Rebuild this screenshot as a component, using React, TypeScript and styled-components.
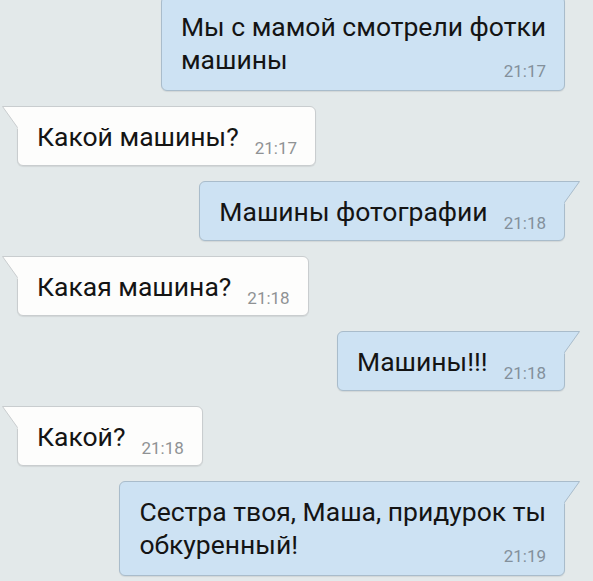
import React from "react";
import styled, { createGlobalStyle } from "styled-components";

const GlobalStyle = createGlobalStyle`
  html, body {
    margin: 0;
    padding: 0;
    background: #e3e9ea;
    overflow: hidden;
  }
  body {
    font-family: Roboto, "Noto Sans", Arial, sans-serif;
  }
`;

type Side = "in" | "out";

interface Message {
  side: Side;
  lines: string[];
  time: string;
  tail: boolean;
}

const messages: Message[] = [
  { side: "out", lines: ["Мы с мамой смотрели фотки", "машины"], time: "21:17", tail: false },
  { side: "in", lines: ["Какой машины?"], time: "21:17", tail: true },
  { side: "out", lines: ["Машины фотографии"], time: "21:18", tail: true },
  { side: "in", lines: ["Какая машина?"], time: "21:18", tail: true },
  { side: "out", lines: ["Машины!!!"], time: "21:18", tail: true },
  { side: "in", lines: ["Какой?"], time: "21:18", tail: true },
  { side: "out", lines: ["Сестра твоя, Маша, придурок ты", "обкуренный!"], time: "21:19", tail: true },
];

const Page = styled.div`
  width: 593px;
  height: 581px;
  box-sizing: border-box;
  padding: 0 28px 0 17px;
  display: flex;
  flex-direction: column;
  gap: 15px;
  overflow: hidden;
`;

const Row = styled.div<{ $side: Side; $first?: boolean }>`
  display: flex;
  justify-content: ${(p) => (p.$side === "out" ? "flex-end" : "flex-start")};
  margin-top: ${(p) => (p.$first ? "-4px" : "0")};
`;

const Bubble = styled.div<{ $side: Side; $tail: boolean }>`
  position: relative;
  display: flex;
  flex-direction: column;
  padding: 13px 18px 12px 19px;
  background: ${(p) => (p.$side === "out" ? "#cde2f3" : "#fdfdfc")};
  border: 1px solid ${(p) => (p.$side === "out" ? "#a9bccb" : "#c9cdcf")};
  border-radius: 6px;
  ${(p) =>
    p.$tail
      ? p.$side === "out"
        ? "border-top-right-radius: 0;"
        : "border-top-left-radius: 0;"
      : ""}
  box-shadow: 0 1px 1px rgba(0, 0, 0, 0.08);
`;

const Line = styled.div`
  font-size: 26.5px;
  line-height: 33px;
  color: #141414;
  white-space: nowrap;
`;

const LastRow = styled.div<{ $multi: boolean }>`
  display: flex;
  align-items: flex-end;
  justify-content: space-between;
  gap: 16px;
  padding-bottom: ${(p) => (p.$multi ? "2px" : "0")};
`;

const Time = styled.span<{ $side: Side }>`
  font-size: 17px;
  line-height: 17px;
  color: ${(p) => (p.$side === "out" ? "#83909b" : "#8f9294")};
  margin-bottom: -4px;
  white-space: nowrap;
`;

const TailSvg = styled.svg<{ $side: Side }>`
  position: absolute;
  top: -1px;
  ${(p) => (p.$side === "out" ? "right: -16px;" : "left: -16px;")}
  width: 17px;
  height: 23px;
  overflow: visible;
  transform: ${(p) => (p.$side === "out" ? "scaleX(-1)" : "none")};
`;

const Tail: React.FC<{ side: Side }> = ({ side }) => {
  const fill = side === "out" ? "#cde2f3" : "#fdfdfc";
  const stroke = side === "out" ? "#a9bccb" : "#c9cdcf";
  return (
    <TailSvg $side={side} viewBox="0 0 17 23">
      <path d="M0.5 0.5 L17 0.5 L17 23 L15.5 23 L15.5 21.5 Z" fill={fill} />
      <path d="M15.5 21.5 L0.5 0.5 L17 0.5" fill="none" stroke={stroke} strokeWidth="1" />
    </TailSvg>
  );
};

export default function App() {
  return (
    <>
      <GlobalStyle />
      <Page>
        {messages.map((m, i) => {
          const head = m.lines.slice(0, -1);
          const last = m.lines[m.lines.length - 1];
          return (
            <Row key={i} $side={m.side} $first={i === 0}>
              <Bubble $side={m.side} $tail={m.tail}>
                {m.tail && <Tail side={m.side} />}
                {head.map((l, j) => (
                  <Line key={j}>{l}</Line>
                ))}
                <LastRow $multi={head.length > 0}>
                  <Line>{last}</Line>
                  <Time $side={m.side}>{m.time}</Time>
                </LastRow>
              </Bubble>
            </Row>
          );
        })}
      </Page>
    </>
  );
}
